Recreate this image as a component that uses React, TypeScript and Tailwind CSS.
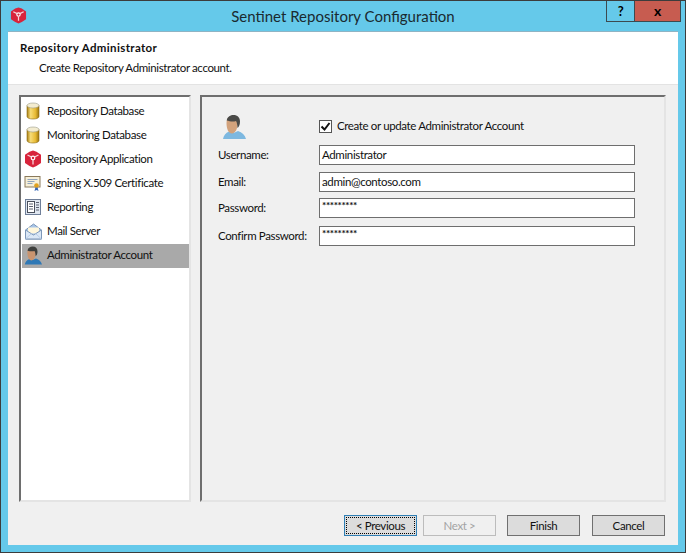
const font = 'font-["Lato","Open_Sans",sans-serif]';

function DbIcon() {
  return (
    <svg width="14" height="18" viewBox="0 0 14 18">
      <defs>
        <linearGradient id="db" x1="0" x2="1" y1="0" y2="0">
          <stop offset="0" stopColor="#a87f12" />
          <stop offset="0.3" stopColor="#f7dc78" />
          <stop offset="0.7" stopColor="#e8bb35" />
          <stop offset="1" stopColor="#9c7610" />
        </linearGradient>
      </defs>
      <path d="M1 3.500v11c0 1.600 2.700 2.500 6 2.500s6-.9 6-2.500v-11z" fill="url(#db)" stroke="#8a6a14" strokeWidth="0.6" />
      <ellipse cx="7" cy="3.500" rx="6" ry="2.500" fill="#f3ecd0" stroke="#9a9a8a" strokeWidth="0.6" />
    </svg>
  );
}

function LogoIcon({ size = 18 }: { size?: number }) {
  return (
    <svg width={size} height={size} viewBox="0 0 18 18">
      <path d="M9 .5l3.500 1.200 4.500 3v8.300L12.500 16 9 17.500 5.500 16 1 13V4.700l4.500-3z" fill="#d8243c" />
      <circle cx="9" cy="8" r="1.800" fill="none" stroke="#fff" strokeWidth="1.200" />
      <path d="M3.500 5l4 2M14.500 5l-4 2M9 10v4.500" stroke="#f6d5da" strokeWidth="1.300" />
    </svg>
  );
}

function CertIcon() {
  return (
    <svg width="18" height="18" viewBox="0 0 18 18">
      <rect x="1" y="2.500" width="15" height="10.500" fill="#f6efd8" stroke="#8a7a5c" />
      <path d="M3.500 5.500h10M3.500 7.500h7M3.500 9.500h5" stroke="#8fa3bd" />
      <path d="M11.500 13l-1 4 2-1 2 1-1-4" fill="#3566b8" />
      <circle cx="12.500" cy="11.500" r="2.300" fill="#e0a11f" />
    </svg>
  );
}

function ReportIcon() {
  return (
    <svg width="16" height="16" viewBox="0 0 16 16">
      <rect x="0.500" y="0.500" width="15" height="15" fill="#dfe6f0" stroke="#6f7f99" />
      <rect x="2.500" y="2.500" width="7" height="11" fill="#fff" stroke="#4a4f5c" />
      <path d="M4 5h4M4 7.500h4M4 10h4M11 3.500h3M11 6h3M11 8.500h3M11 11h3" stroke="#5a6070" />
    </svg>
  );
}

function MailIcon() {
  return (
    <svg width="17" height="17" viewBox="0 0 17 17">
      <path d="M.5 7L8.500 1l8 6v9H.5z" fill="#a9c6e8" stroke="#7d97b8" />
      <path d="M3 4.500h11v6H3z" fill="#fff7dc" />
      <path d="M.5 7l8 5 8-5v9H.5z" fill="#dbe8f6" stroke="#7d97b8" />
      <path d="M.5 16l6-5.500M16.500 16l-6-5.500" stroke="#b9cde6" />
    </svg>
  );
}

// head is turned a little to the left, hair wraps over the top and right
function PersonIcon({ size = 18, shirt = "#2f78b5", skin = "#c9946f", hair = "#3e3f3d" }: { size?: number; shirt?: string; skin?: string; hair?: string }) {
  return (
    <svg width={size} height={size} viewBox="0 0 24 24">
      <path d="M1 24c.8-3.500 2.500-6 6-7.500l4.500 1.500 4.500-2c4 1.500 7 4 8 8z" fill={shirt} />
      <path d="M4.500 8C4.500 3 7 1.500 10 1.500S15.500 4 15.500 9c0 5-2 9-5.500 9.500C6 18.500 4.500 13 4.500 8z" fill={skin} />
      <path d="M4.800 5C5.500 1.500 8.500 0 11.500 0c4 0 6.500 2.500 6.500 6.500 0 3-1 5.500-2.500 6.500-.2-3-.5-5.500-1.500-7-3 1-6.500.3-9.200-.5z" fill={hair} />
    </svg>
  );
}

const items = [
  { label: "Repository Database", icon: <DbIcon /> },
  { label: "Monitoring Database", icon: <DbIcon /> },
  { label: "Repository Application", icon: <LogoIcon /> },
  { label: "Signing X.509 Certificate", icon: <CertIcon /> },
  { label: "Reporting", icon: <ReportIcon /> },
  { label: "Mail Server", icon: <MailIcon /> },
  { label: "Administrator Account", icon: <PersonIcon size={19} />, active: true },
];

const fields = [
  { label: "Username:", value: "Administrator", cls: "mt-[6px]" },
  { label: "Email:", value: "admin@contoso.com", cls: "mt-[7px]" },
  { label: "Password:", value: "*********", cls: "mt-[6px]", secret: true },
  { label: "Confirm Password:", value: "*********", cls: "mt-[8px]", secret: true },
];

export default function App() {
  return (
    <div className={`w-[686px] h-[553px] bg-[#65c9ea] border border-[#3c3c3c] flex flex-col overflow-hidden text-[11.500px] tracking-[-0.37px] leading-4 text-[#111] ${font}`}>
      <div className="h-[30px] shrink-0 grid grid-cols-[1fr_auto_1fr] items-start">
        <div className="pl-[9px] pt-[6px]">
          <LogoIcon size={17} />
        </div>
        <div className="pt-[5px] text-[15px] tracking-normal leading-5 text-[#1a2a30]">Sentinet Repository Configuration</div>
        <div className="flex justify-end pr-[4px]">
          <div className="w-[29px] h-[21px] border border-t-0 border-[#3c4a50] flex items-center justify-center font-bold text-[13px] text-black">?</div>
          <div className="w-[46px] h-[21px] bg-[#c75c50] border-b border-r border-[#3c4a50] flex items-center justify-center font-bold text-[14px] text-black">x</div>
        </div>
      </div>
      <div className="flex-1 mx-[7px] mb-[7px] bg-[#f0f0f0] flex flex-col border-t border-[#8fb4c4]">
        <div className="h-[53px] shrink-0 bg-white border-b border-[#e3e3e3] pl-[12px] pt-[8px]">
          <div className="font-bold tracking-[0.37px] text-[#111]">Repository Administrator</div>
          <div className="pl-[19px] mt-[4px]">Create Repository Administrator account.</div>
        </div>
        <div className="flex gap-[9px] pl-[11px] pr-[12px] pt-[10px]">
          <div className="w-[172px] h-[407px] bg-white border-2 border-[#e4e4e4] border-t-[#6e6e6e] border-l-[#6e6e6e] pt-[3px]">
            {items.map((it) => (
              <div key={it.label} className={`h-[24px] ml-px flex items-center gap-[5px] pl-[2px] pb-[2px] ${it.active ? "bg-[#a9a9a9]" : ""}`}>
                <div className="w-[18px] flex justify-center">{it.icon}</div>
                <span>{it.label}</span>
              </div>
            ))}
          </div>
          <div className="flex-1 h-[407px] border-2 border-[#e4e4e4] border-t-[#6e6e6e] border-l-[#6e6e6e] pl-[16px] pt-[18px]">
            <div className="flex items-start h-[24px]">
              <div className="w-[101px] pl-[4px]">
                <PersonIcon size={24} shirt="#7db8e0" skin="#d2a27c" hair="#4a4a48" />
              </div>
              <div className="flex items-center mt-[3px]">
                <div className="w-[13px] h-[13px] bg-white border border-[#555] flex items-center justify-center">
                  <svg width="11" height="11" viewBox="0 0 11 11">
                    <path d="M1.500 5.500l3 3 5-6.500" fill="none" stroke="#111" strokeWidth="2" />
                  </svg>
                </div>
                <span className="ml-[5px]">Create or update Administrator Account</span>
              </div>
            </div>
            {fields.map((f) => (
              <div key={f.label} className={`flex items-center ${f.cls}`}>
                <div className="w-[101px] whitespace-nowrap">{f.label}</div>
                <div className={`w-[316px] h-[20px] bg-white border border-[#6e6e6e] px-[2px] ${f.secret ? "text-[10px] font-bold leading-[13px]" : "leading-[17px]"}`}>{f.value}</div>
              </div>
            ))}
          </div>
        </div>
        <div className="flex justify-end pr-[13px] mt-[13px]">
          <div className="w-[73px] h-[21px] bg-[#dcdcdc] border border-[#2f7fb5] mr-[6px] p-px">
            <div className="h-full border border-dotted border-black flex items-center justify-center">&lt; Previous</div>
          </div>
          <div className="w-[73px] h-[21px] bg-[#f0f0f0] border border-[#bcbcbc] text-[#a3a3a3] mr-[11px] flex items-center justify-center">Next &gt;</div>
          <div className="w-[73px] h-[21px] bg-[#dcdcdc] border border-[#707070] mr-[12px] flex items-center justify-center">Finish</div>
          <div className="w-[73px] h-[21px] bg-[#dcdcdc] border border-[#707070] flex items-center justify-center">Cancel</div>
        </div>
      </div>
    </div>
  );
}
